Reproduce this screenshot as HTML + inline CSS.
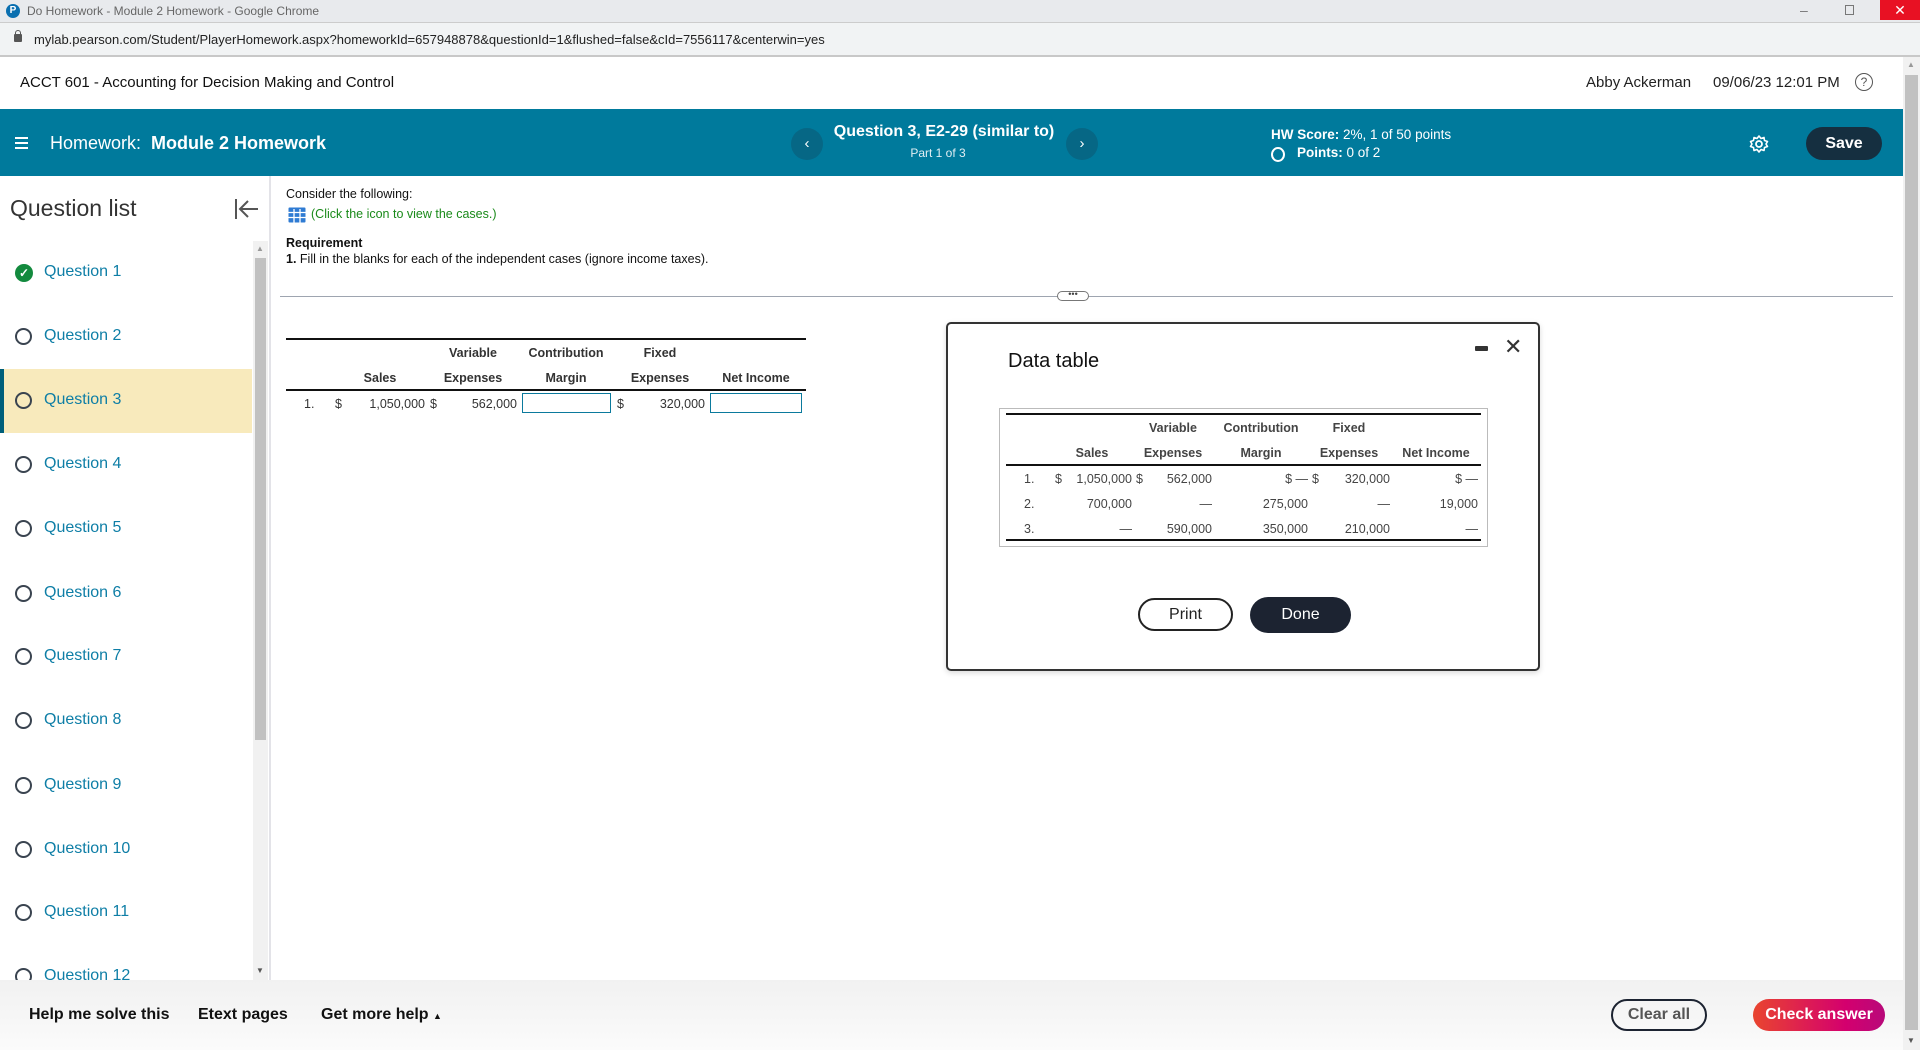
<!DOCTYPE html>
<html><head><meta charset="utf-8"><style>
*{margin:0;padding:0;box-sizing:border-box}
body{width:1920px;height:1050px;overflow:hidden;position:relative;background:#fff;font-family:"Liberation Sans",Arial,sans-serif;color:#222}
.a{position:absolute;white-space:nowrap}
.tb{left:0;top:0;width:1920px;height:23px;background:#e8eaed;border-bottom:1px solid #ccc}
.ub{left:0;top:23px;width:1920px;height:34px;background:#f1f3f4;border-bottom:2px solid #c8c8c8}
.bar{left:0;top:109px;width:1903px;height:67px;background:#007a9c}
.q{font-size:16px;color:#0e7ea6}
.circ{width:17px;height:17px;border:2px solid #3a4450;border-radius:50%}
.th{font-size:12.5px;font-weight:bold;color:#333;transform:translateX(-50%)}
.td{font-size:12.5px;color:#333}
.r{transform:translateX(-100%)}
.dh{font-size:12.5px;font-weight:bold;color:#444;transform:translateX(-50%)}
.dd{font-size:12.5px;color:#444}
</style></head><body>
<div class="a tb"></div>
<div class="a" style="left:6px;top:4px;width:14px;height:14px;border-radius:50%;background:#0a6fb0;color:#fff;font-size:10px;font-weight:bold;text-align:center;line-height:14px">P</div>
<div class="a" style="left:27px;top:4px;font-size:12px;color:#666">Do Homework - Module 2 Homework - Google Chrome</div>
<div class="a" style="left:1800px;top:2px;font-size:14px;color:#777">–</div>
<div class="a" style="left:1845px;top:5px;width:9px;height:10px;border:1px solid #777"></div>
<div class="a" style="left:1880px;top:0;width:40px;height:20px;background:#e81123;color:#fff;font-size:14px;text-align:center;line-height:20px">✕</div>
<div class="a ub"></div>
<div class="a" style="left:14px;top:34px;width:8px;height:8px;background:#555;border-radius:1px"></div>
<div class="a" style="left:15px;top:30px;width:6px;height:6px;border:1.5px solid #555;border-bottom:none;border-radius:3px 3px 0 0"></div>
<div class="a" style="left:34px;top:32px;font-size:13px;color:#222">mylab.pearson.com/Student/PlayerHomework.aspx?homeworkId=657948878&amp;questionId=1&amp;flushed=false&amp;cId=7556117&amp;centerwin=yes</div>

<div class="a" style="left:20px;top:74px;font-size:15px;color:#111">ACCT 601 - Accounting for Decision Making and Control</div>
<div class="a" style="left:1586px;top:74px;font-size:15px;color:#222">Abby Ackerman</div>
<div class="a" style="left:1713px;top:74px;font-size:15px;color:#222">09/06/23 12:01 PM</div>
<div class="a" style="left:1855px;top:73px;width:18px;height:18px;border:1.5px solid #555;border-radius:50%;font-size:12px;text-align:center;line-height:16px;color:#555">?</div>

<div class="a bar"></div>
<div class="a" style="left:15px;top:137px;width:13px;height:2px;background:#fff;box-shadow:0 5px 0 #fff,0 10px 0 #fff"></div>
<div class="a" style="left:50px;top:133px;font-size:18px;color:#fff">Homework:&nbsp; <b>Module 2 Homework</b></div>
<div class="a" style="left:791px;top:128px;width:32px;height:32px;border-radius:50%;background:#066785;color:#fff;text-align:center;line-height:31px;font-size:15px">‹</div>
<div class="a" style="left:1066px;top:128px;width:32px;height:32px;border-radius:50%;background:#066785;color:#fff;text-align:center;line-height:31px;font-size:15px">›</div>
<div class="a" style="left:944px;top:123px;transform:translateX(-50%);font-size:16px;font-weight:bold;color:#fff">Question 3, E2-29 (similar to)</div>
<div class="a" style="left:938px;top:146px;transform:translateX(-50%);font-size:12px;color:#e0eef3">Part 1 of 3</div>
<div class="a" style="left:1271px;top:127px;font-size:13.5px;color:#fff"><b>HW Score:</b> 2%, 1 of 50 points</div>
<div class="a" style="left:1271px;top:147px;width:14px;height:15px;border:2px solid #fff;border-radius:50%"></div>
<div class="a" style="left:1297px;top:145px;font-size:13.5px;color:#fff"><b>Points:</b> 0 of 2</div>
<svg class="a" style="left:1749px;top:134px" width="20" height="20" viewBox="0 0 20 20"><circle cx="10" cy="10" r="3" fill="none" stroke="#fff" stroke-width="1.8"/><path d="M10 2l2 2.5 3-1 .5 3 3 1-1.5 2.5 1.5 2.5-3 1-.5 3-3-1-2 2.5-2-2.5-3 1-.5-3-3-1L3 10 1.5 7.5l3-1 .5-3 3 1z" fill="none" stroke="#fff" stroke-width="1.6" stroke-linejoin="round"/></svg>
<div class="a" style="left:1806px;top:127px;width:76px;height:33px;border-radius:17px;background:#152f40;color:#fff;font-weight:bold;font-size:16px;text-align:center;line-height:33px">Save</div>

<!-- sidebar -->
<div class="a" style="left:10px;top:195px;font-size:23px;color:#333">Question list</div>
<svg class="a" style="left:234px;top:198px" width="26" height="22" viewBox="0 0 26 22"><line x1="2" y1="1" x2="2" y2="21" stroke="#555" stroke-width="2"/><path d="M24 11H7M14 3l-8 8 8 8" fill="none" stroke="#555" stroke-width="2"/></svg>
<div class="a" style="left:0;top:369px;width:252px;height:64px;background:#f8eabc"></div>
<div class="a" style="left:0;top:369px;width:4px;height:64px;background:#005f7a"></div>
<div class="a" style="left:253px;top:241px;width:15px;height:740px;background:#f1f1f1"></div>
<div class="a" style="left:255px;top:258px;width:11px;height:482px;background:#c1c1c1"></div>
<div class="a" style="left:256px;top:244px;font-size:8px;color:#999">▲</div>
<div class="a" style="left:256px;top:966px;font-size:8px;color:#555">▼</div>
<div class="a" style="left:269px;top:176px;width:2px;height:804px;background:#e3e3e8"></div>
<div class="a" style="left:15px;top:264px;width:18px;height:18px;border-radius:50%;background:#138a3e;color:#fff;font-size:12px;text-align:center;line-height:18px;font-weight:bold">✓</div>
<div class="a q" style="left:44px;top:263px">Question 1</div>
<div class="a circ" style="left:15px;top:328px"></div><div class="a q" style="left:44px;top:327px">Question 2</div>
<div class="a circ" style="left:15px;top:392px"></div><div class="a q" style="left:44px;top:391px">Question 3</div>
<div class="a circ" style="left:15px;top:456px"></div><div class="a q" style="left:44px;top:455px">Question 4</div>
<div class="a circ" style="left:15px;top:520px"></div><div class="a q" style="left:44px;top:519px">Question 5</div>
<div class="a circ" style="left:15px;top:585px"></div><div class="a q" style="left:44px;top:584px">Question 6</div>
<div class="a circ" style="left:15px;top:648px"></div><div class="a q" style="left:44px;top:647px">Question 7</div>
<div class="a circ" style="left:15px;top:712px"></div><div class="a q" style="left:44px;top:711px">Question 8</div>
<div class="a circ" style="left:15px;top:777px"></div><div class="a q" style="left:44px;top:776px">Question 9</div>
<div class="a circ" style="left:15px;top:841px"></div><div class="a q" style="left:44px;top:840px">Question 10</div>
<div class="a circ" style="left:15px;top:904px"></div><div class="a q" style="left:44px;top:903px">Question 11</div>
<div class="a circ" style="left:15px;top:968px"></div><div class="a q" style="left:44px;top:967px">Question 12</div>

<!-- content -->
<div class="a" style="left:286px;top:187px;font-size:12.5px;color:#111">Consider the following:</div>
<svg class="a" style="left:288px;top:207px" width="18" height="16" viewBox="0 0 18 16"><rect x="0.5" y="0.5" width="17" height="15" fill="#2f7bd3" rx="1"/><g stroke="#fff" stroke-width="1.3"><line x1="0" y1="5.5" x2="18" y2="5.5"/><line x1="0" y1="10.5" x2="18" y2="10.5"/><line x1="6" y1="2" x2="6" y2="16"/><line x1="12" y1="2" x2="12" y2="16"/></g></svg>
<div class="a" style="left:311px;top:207px;font-size:12.5px;color:#1a8a1a">(Click the icon to view the cases.)</div>
<div class="a" style="left:286px;top:236px;font-size:12.5px;font-weight:bold;color:#111">Requirement</div>
<div class="a" style="left:286px;top:252px;font-size:12.5px;color:#111"><b>1.</b> Fill in the blanks for each of the independent cases (ignore income taxes).</div>
<div class="a" style="left:280px;top:296px;width:1613px;height:1px;background:#9ea5b0"></div>
<div class="a" style="left:1057px;top:291px;width:32px;height:10px;border:1.5px solid #777;border-radius:6px;background:#fff;font-size:9px;line-height:5px;text-align:center;color:#444">•••</div>

<div class="a" style="left:286px;top:338px;width:520px;height:2px;background:#111"></div>
<div class="a th" style="left:473px;top:346px">Variable</div>
<div class="a th" style="left:566px;top:346px">Contribution</div>
<div class="a th" style="left:660px;top:346px">Fixed</div>
<div class="a th" style="left:380px;top:371px">Sales</div>
<div class="a th" style="left:473px;top:371px">Expenses</div>
<div class="a th" style="left:566px;top:371px">Margin</div>
<div class="a th" style="left:660px;top:371px">Expenses</div>
<div class="a th" style="left:756px;top:371px">Net Income</div>
<div class="a" style="left:286px;top:389px;width:520px;height:2px;background:#111"></div>
<div class="a td" style="left:304px;top:397px">1.</div>
<div class="a td" style="left:335px;top:397px">$</div>
<div class="a td r" style="left:425px;top:397px">1,050,000</div>
<div class="a td" style="left:430px;top:397px">$</div>
<div class="a td r" style="left:517px;top:397px">562,000</div>
<div class="a" style="left:522px;top:393px;width:89px;height:20px;border:1px solid #0b7a9d"></div>
<div class="a td" style="left:617px;top:397px">$</div>
<div class="a td r" style="left:705px;top:397px">320,000</div>
<div class="a" style="left:710px;top:393px;width:92px;height:20px;border:1px solid #0b7a9d"></div>

<!-- modal -->
<div class="a" style="left:946px;top:322px;width:594px;height:349px;border:2px solid #333;border-radius:5px;background:#fff;box-shadow:0 2px 6px rgba(0,0,0,.15)"></div>
<div class="a" style="left:1008px;top:350px;font-size:20px;color:#111">Data table</div>
<div class="a" style="left:1475px;top:346px;width:13px;height:5px;background:#333;border-radius:1px"></div>
<div class="a" style="left:1504px;top:334px;font-size:22px;color:#333">✕</div>
<div class="a" style="left:999px;top:408px;width:489px;height:139px;border:1px solid #bbb"></div>
<div class="a" style="left:1006px;top:413px;width:475px;height:2px;background:#111"></div>
<div class="a dh" style="left:1173px;top:421px">Variable</div>
<div class="a dh" style="left:1261px;top:421px">Contribution</div>
<div class="a dh" style="left:1349px;top:421px">Fixed</div>
<div class="a dh" style="left:1092px;top:446px">Sales</div>
<div class="a dh" style="left:1173px;top:446px">Expenses</div>
<div class="a dh" style="left:1261px;top:446px">Margin</div>
<div class="a dh" style="left:1349px;top:446px">Expenses</div>
<div class="a dh" style="left:1436px;top:446px">Net Income</div>
<div class="a" style="left:1006px;top:464px;width:475px;height:1.5px;background:#111"></div>
<div class="a dd" style="left:1024px;top:472px">1.</div>
<div class="a dd" style="left:1055px;top:472px">$</div>
<div class="a dd r" style="left:1132px;top:472px">1,050,000</div>
<div class="a dd" style="left:1136px;top:472px">$</div>
<div class="a dd r" style="left:1212px;top:472px">562,000</div>
<div class="a dd r" style="left:1308px;top:472px">$ —</div>
<div class="a dd" style="left:1312px;top:472px">$</div>
<div class="a dd r" style="left:1390px;top:472px">320,000</div>
<div class="a dd r" style="left:1478px;top:472px">$ —</div>
<div class="a dd" style="left:1024px;top:497px">2.</div>
<div class="a dd r" style="left:1132px;top:497px">700,000</div>
<div class="a dd r" style="left:1212px;top:497px">—</div>
<div class="a dd r" style="left:1308px;top:497px">275,000</div>
<div class="a dd r" style="left:1390px;top:497px">—</div>
<div class="a dd r" style="left:1478px;top:497px">19,000</div>
<div class="a dd" style="left:1024px;top:522px">3.</div>
<div class="a dd r" style="left:1132px;top:522px">—</div>
<div class="a dd r" style="left:1212px;top:522px">590,000</div>
<div class="a dd r" style="left:1308px;top:522px">350,000</div>
<div class="a dd r" style="left:1390px;top:522px">210,000</div>
<div class="a dd r" style="left:1478px;top:522px">—</div>
<div class="a" style="left:1006px;top:539px;width:475px;height:1.5px;background:#111"></div>
<div class="a" style="left:1138px;top:598px;width:95px;height:33px;border:2px solid #222;border-radius:17px;text-align:center;line-height:29px;font-size:16px;color:#222">Print</div>
<div class="a" style="left:1250px;top:597px;width:101px;height:36px;border-radius:18px;background:#1c2331;text-align:center;line-height:36px;font-size:16px;color:#fff">Done</div>

<!-- bottom -->
<div class="a" style="left:0;top:980px;width:1903px;height:70px;background:linear-gradient(#f1f1f1,#fbfbfb)"></div>
<div class="a" style="left:29px;top:1006px;font-size:16px;font-weight:bold;color:#111">Help me solve this</div>
<div class="a" style="left:198px;top:1006px;font-size:16px;font-weight:bold;color:#111">Etext pages</div>
<div class="a" style="left:321px;top:1006px;font-size:16px;font-weight:bold;color:#111">Get more help <span style="font-size:9px">▲</span></div>
<div class="a" style="left:1611px;top:999px;width:96px;height:32px;border:2px solid #1c2331;border-radius:16px;text-align:center;line-height:28px;font-size:16px;font-weight:bold;color:#555">Clear all</div>
<div class="a" style="left:1753px;top:999px;width:132px;height:32px;border-radius:16px;background:linear-gradient(90deg,#e9452f,#d4006e 70%,#b8097a);text-align:center;line-height:32px;font-size:16px;font-weight:bold;color:#fff">Check answer</div>

<div class="a" style="left:1903px;top:57px;width:17px;height:993px;background:#f1f1f1"></div>
<div class="a" style="left:1905px;top:75px;width:13px;height:955px;background:#c1c1c1"></div>
<div class="a" style="left:1907px;top:60px;font-size:8px;color:#999">▲</div>
<div class="a" style="left:1907px;top:1036px;font-size:8px;color:#555">▼</div>
</body></html>
